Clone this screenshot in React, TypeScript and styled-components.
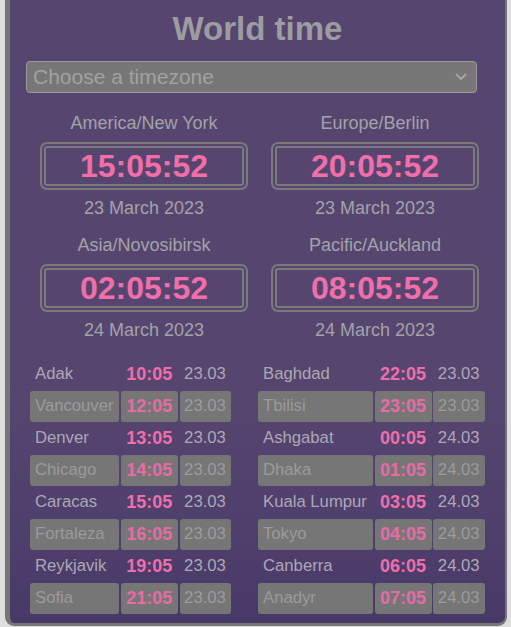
import React from "react";
import styled, { createGlobalStyle } from "styled-components";

const Global = createGlobalStyle`
  html, body { margin: 0; padding: 0; background: #dedede; }
  body { font-family: "Liberation Sans", Arial, sans-serif; }
`;

const Panel = styled.div`
  margin-left: 5px;
  width: 495px;
  box-sizing: content-box;
  border-left: 5px solid #767676;
  border-right: 2px solid #767676;
  border-bottom: 3px solid #767676;
  border-radius: 0 0 9px 9px;
  background: linear-gradient(180deg, #56466f 0%, #56466f 60%, #4e3e6c 88%, #483868 100%);
  padding: 9px 0 9.5px;
  display: flex;
  flex-direction: column;
`;

const Title = styled.h1`
  margin: 0;
  font-size: 33px;
  line-height: 40px;
  font-weight: bold;
  text-align: center;
  color: #9c9ca1;
`;

const Select = styled.div`
  margin: 12px 0 0 16px;
  width: 451px;
  height: 32px;
  box-sizing: border-box;
  border: 1px solid #9a9a9a;
  border-radius: 4px;
  background: #777777;
  display: flex;
  align-items: center;
  justify-content: space-between;
  padding: 0 9px 0 6px;
  color: #a2a2a2;
  font-size: 21px;
`;

const ClockGrid = styled.div`
  margin: 19px 0 0 30px;
  display: grid;
  grid-template-columns: 208px 208px;
  column-gap: 23px;
  row-gap: 15px;
`;

const ClockCell = styled.div`
  display: flex;
  flex-direction: column;
  align-items: center;
`;

const Zone = styled.div`
  font-size: 18px;
  line-height: 22px;
  color: #a3a2a9;
`;

const ClockBox = styled.div`
  margin-top: 8px;
  width: 208px;
  height: 48px;
  box-sizing: border-box;
  border: 6px double #7a7a7a;
  border-radius: 7px;
  display: flex;
  align-items: center;
  justify-content: center;
  font-size: 32px;
  font-weight: bold;
  color: #f06eaa;
`;

const DateText = styled.div`
  margin-top: 7px;
  font-size: 18px;
  line-height: 22px;
  color: #a3a2a9;
`;

const Tables = styled.div`
  margin: 18px 0 0 20px;
  display: flex;
  gap: 27.5px;
`;

const Table = styled.div<{ $cols: string }>`
  display: grid;
  grid-template-columns: ${(p) => p.$cols};
  grid-auto-rows: 30.5px;
  gap: 1.5px;
`;

const Cell = styled.div<{ $shade: boolean; $kind: "city" | "time" | "date" }>`
  display: flex;
  align-items: center;
  justify-content: ${(p) => (p.$kind === "city" ? "flex-start" : "center")};
  padding-left: ${(p) => (p.$kind === "city" ? "5px" : "0")};
  border-radius: 3px;
  background: ${(p) => (p.$shade ? "#767676" : "transparent")};
  white-space: nowrap;
  font-size: ${(p) => (p.$kind === "time" ? "18px" : "16.7px")};
  font-weight: ${(p) => (p.$kind === "time" ? "bold" : "normal")};
  color: ${(p) =>
    p.$kind === "time"
      ? p.$shade
        ? "#e86ba6"
        : "#f06eaa"
      : p.$shade
      ? "#9b9b9b"
      : "#aca8b4"};
`;

const clocks = [
  { zone: "America/New York", time: "15:05:52", date: "23 March 2023" },
  { zone: "Europe/Berlin", time: "20:05:52", date: "23 March 2023" },
  { zone: "Asia/Novosibirsk", time: "02:05:52", date: "24 March 2023" },
  { zone: "Pacific/Auckland", time: "08:05:52", date: "24 March 2023" },
];

const left: [string, string, string][] = [
  ["Adak", "10:05", "23.03"],
  ["Vancouver", "12:05", "23.03"],
  ["Denver", "13:05", "23.03"],
  ["Chicago", "14:05", "23.03"],
  ["Caracas", "15:05", "23.03"],
  ["Fortaleza", "16:05", "23.03"],
  ["Reykjavik", "19:05", "23.03"],
  ["Sofia", "21:05", "23.03"],
];

const right: [string, string, string][] = [
  ["Baghdad", "22:05", "23.03"],
  ["Tbilisi", "23:05", "23.03"],
  ["Ashgabat", "00:05", "24.03"],
  ["Dhaka", "01:05", "24.03"],
  ["Kuala Lumpur", "03:05", "24.03"],
  ["Tokyo", "04:05", "24.03"],
  ["Canberra", "06:05", "24.03"],
  ["Anadyr", "07:05", "24.03"],
];

function CityTable({ rows, cols }: { rows: [string, string, string][]; cols: string }) {
  return (
    <Table $cols={cols}>
      {rows.map(([city, time, date], i) => {
        const shade = i % 2 === 1;
        return (
          <React.Fragment key={city}>
            <Cell $shade={shade} $kind="city">{city}</Cell>
            <Cell $shade={shade} $kind="time">{time}</Cell>
            <Cell $shade={shade} $kind="date">{date}</Cell>
          </React.Fragment>
        );
      })}
    </Table>
  );
}

export default function App() {
  return (
    <>
      <Global />
      <Panel>
        <Title>World time</Title>
        <Select>
          <span>Choose a timezone</span>
          <svg width="12" height="8" viewBox="0 0 12 8">
            <path d="M1.5 1.5 L6 6 L10.5 1.5" fill="none" stroke="#a8a8a8" strokeWidth="1.8" strokeLinecap="round" strokeLinejoin="round" />
          </svg>
        </Select>
        <ClockGrid>
          {clocks.map((c) => (
            <ClockCell key={c.zone}>
              <Zone>{c.zone}</Zone>
              <ClockBox>{c.time}</ClockBox>
              <DateText>{c.date}</DateText>
            </ClockCell>
          ))}
        </ClockGrid>
        <Tables>
          <CityTable rows={left} cols="89px 57.5px 51px" />
          <CityTable rows={right} cols="115px 57px 51.5px" />
        </Tables>
      </Panel>
    </>
  );
}
